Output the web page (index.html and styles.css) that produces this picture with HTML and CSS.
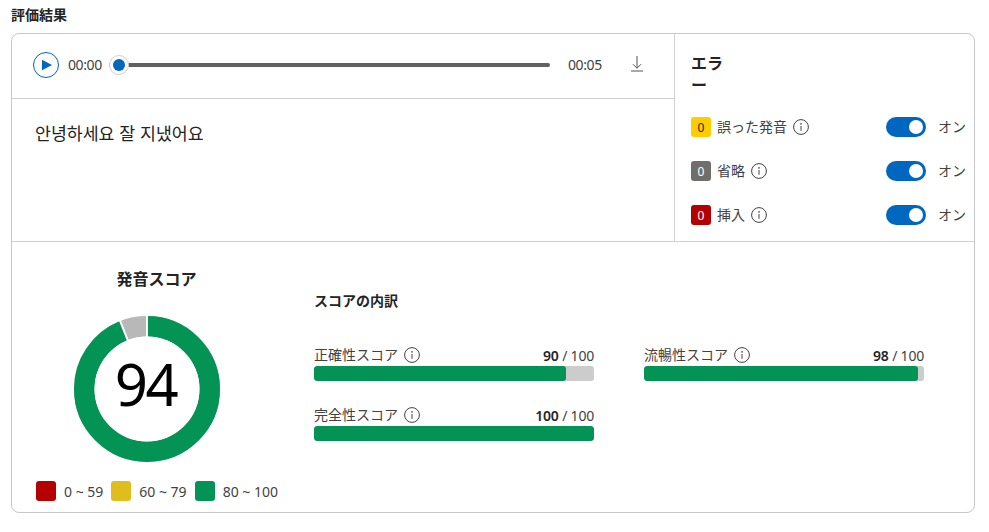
FILE: index.html
```html
<!DOCTYPE html>
<html lang="ja">
<head>
<meta charset="utf-8">
<title>評価結果</title>
<link rel="stylesheet" href="styles.css">
</head>
<body>
<svg class="defs" width="0" height="0" aria-hidden="true">
  <symbol id="info" viewBox="0 0 16 16">
    <circle cx="8" cy="8" r="7.4" fill="none" stroke="#424242" stroke-width="1"/>
    <circle cx="8" cy="4.9" r=".8" fill="#424242"/>
    <path d="M8 7v4.8" stroke="#424242" stroke-width="1" fill="none"/>
  </symbol>
</svg>
<main class="page">
  <h1 class="page-title">評価結果</h1>
  <section class="card">
    <div class="top">
      <div class="left">
        <div class="player">
          <span class="play">
            <svg width="12" height="12" viewBox="0 0 12 12"><path d="M1 .8 11 6 1 11.2Z" fill="#0067c0"/></svg>
          </span>
          <span class="time time-start">00:00</span>
          <div class="track"><span class="thumb"><span class="thumb-dot"></span></span></div>
          <span class="time time-end">00:05</span>
          <svg class="download" width="14" height="17" viewBox="0 0 14 17"><path d="M7 1v12M3 9.2 7 13.2l4-4M1 16h12" fill="none" stroke="#555" stroke-width="1"/></svg>
        </div>
        <p class="phrase" lang="ko">안녕하세요 잘 지냈어요</p>
      </div>
      <aside class="errors">
        <h2 class="errors-title">エラー</h2>
        <div class="error-row">
          <span class="count count-yellow">0</span><span class="error-label">誤った発音</span>
          <svg class="info" width="16" height="16"><use href="#info"/></svg>
          <span class="toggle"><span class="knob"></span></span><span class="toggle-text">オン</span>
        </div>
        <div class="error-row">
          <span class="count count-gray">0</span><span class="error-label">省略</span>
          <svg class="info" width="16" height="16"><use href="#info"/></svg>
          <span class="toggle"><span class="knob"></span></span><span class="toggle-text">オン</span>
        </div>
        <div class="error-row">
          <span class="count count-red">0</span><span class="error-label">挿入</span>
          <svg class="info" width="16" height="16"><use href="#info"/></svg>
          <span class="toggle"><span class="knob"></span></span><span class="toggle-text">オン</span>
        </div>
      </aside>
    </div>
    <div class="bottom">
      <div class="score">
        <h2 class="score-title">発音スコア</h2>
        <div class="donut">
          <svg width="148" height="148" viewBox="0 0 148 148">
            <circle cx="74" cy="74" r="62.75" fill="none" stroke="#b8b8b8" stroke-width="20.5"/>
            <circle class="arc" cx="74" cy="74" r="62.75" fill="none" stroke="#039455" stroke-width="20.5" pathLength="100" stroke-dasharray="94 6" transform="rotate(-90 74 74)"/>
            <path d="M74 74V0M74 74 46.8 5.2" stroke="#fff" stroke-width="2" fill="none"/>
            <circle cx="74" cy="74" r="52.5" fill="#fff"/>
          </svg>
          <span class="donut-value">94</span>
        </div>
        <div class="legend">
          <span class="swatch swatch-red"></span><span class="legend-text">0 ~ 59</span>
          <span class="swatch swatch-yellow"></span><span class="legend-text">60 ~ 79</span>
          <span class="swatch swatch-green"></span><span class="legend-text">80 ~ 100</span>
        </div>
      </div>
      <div class="breakdown">
        <h3 class="breakdown-title">スコアの内訳</h3>
        <div class="meters">
          <div class="meter">
            <div class="meter-head"><span class="meter-label">正確性スコア</span><svg class="info" width="16" height="16"><use href="#info"/></svg><span class="meter-value"><b>90</b> / 100</span></div>
            <div class="bar"><div class="fill" style="width:90%"></div></div>
          </div>
          <div class="meter">
            <div class="meter-head"><span class="meter-label">流暢性スコア</span><svg class="info" width="16" height="16"><use href="#info"/></svg><span class="meter-value"><b>98</b> / 100</span></div>
            <div class="bar"><div class="fill" style="width:98%"></div></div>
          </div>
          <div class="meter">
            <div class="meter-head"><span class="meter-label">完全性スコア</span><svg class="info" width="16" height="16"><use href="#info"/></svg><span class="meter-value"><b>100</b> / 100</span></div>
            <div class="bar"><div class="fill" style="width:100%"></div></div>
          </div>
        </div>
      </div>
    </div>
  </section>
</main>
</body>
</html>
```
FILE: styles.css
```css
* { box-sizing: border-box; }
html, body { margin: 0; padding: 0; background: #fff; }
body {
  width: 989px;
  height: 532px;
  overflow: hidden;
  font-family: "Noto Sans", "Noto Sans CJK JP", sans-serif;
  color: #242424;
  font-size: 14px;
}
.defs { position: absolute; }
.page { padding: 5px 14px 0 11px; }
.page-title { margin: 0 0 8px; font-size: 14px; line-height: 20px; font-weight: 600; }
.card {
  width: 964px;
  height: 480px;
  border: 1px solid #c8c8c8;
  border-radius: 8px;
  display: flex;
  flex-direction: column;
}
.top { display: flex; height: 208px; border-bottom: 1px solid #d1d1d1; }
.left { width: 663px; border-right: 1px solid #d1d1d1; }
.player {
  height: 65px;
  border-bottom: 1px solid #d1d1d1;
  display: flex;
  align-items: center;
  padding: 0 0 3px 21px;
}
.play {
  width: 26px; height: 26px;
  border: 1px solid #0067c0;
  border-radius: 50%;
  display: flex; align-items: center; justify-content: center;
  padding-left: 2px;
}
.time { font-size: 14px; color: #424242; line-height: 20px; letter-spacing: -.4px; }
.time-start { margin-left: 9px; width: 33px; }
.track {
  margin-left: 8px;
  width: 441px;
  height: 4px;
  background: #616161;
  border-radius: 2px;
  display: flex;
  align-items: center;
}
.thumb {
  width: 20px; height: 20px;
  background: #fff;
  border: 1px solid #d1d1d1;
  border-radius: 50%;
  display: flex; align-items: center; justify-content: center;
}
.thumb-dot { width: 12px; height: 12px; background: #0067c0; border-radius: 50%; }
.time-end { margin-left: 18px; width: 33px; }
.download { margin: 0 0 2px 29px; }
.phrase {
  margin: 22px 0 0 23px;
  font-family: "Noto Sans CJK KR", sans-serif;
  font-size: 17.3px;
  line-height: 24px;
  color: #242424;
}
.errors { flex: 1; padding: 18px 0 0 16px; min-width: 0; }
.errors-title { margin: 0 0 21px; width: 36px; font-size: 16px; line-height: 22px; font-weight: 600; }
.error-row { display: flex; align-items: center; height: 20px; margin-bottom: 24px; }
.count {
  width: 20px; height: 20px;
  border-radius: 3px;
  display: flex; align-items: center; justify-content: center;
  font-size: 12px;
}
.count-yellow { background: #ffcc00; color: #242424; }
.count-gray { background: #706e6b; color: #fff; }
.count-red { background: #b40000; color: #fff; }
.error-label { margin-left: 6px; font-size: 14px; line-height: 20px; color: #424242; }
.info { margin-left: 6px; flex: none; }
.toggle {
  margin-left: auto;
  width: 40px; height: 20px;
  background: #0067c0;
  border-radius: 10px;
  display: flex; align-items: center; justify-content: flex-end;
  padding-right: 3px;
}
.knob { width: 14px; height: 14px; border-radius: 50%; background: #fff; }
.toggle-text { margin-left: 12px; width: 36px; font-size: 14px; line-height: 20px; color: #424242; }
.bottom { flex: 1; display: flex; min-height: 0; }
.score { width: 302px; flex: none; }
.score-title {
  margin: 26px 0 0;
  text-align: center;
  width: 289px;
  font-size: 16px;
  line-height: 22px;
  font-weight: 600;
}
.donut { position: relative; width: 148px; height: 148px; margin: 25px 0 0 61px; }
.donut svg { display: block; }
.donut-value {
  position: absolute;
  inset: 0;
  display: flex; align-items: center; justify-content: center;
  font-size: 58px;
  font-weight: 400;
  line-height: 1;
  color: #000;
  letter-spacing: -2.5px;
  padding: 0 3px 10px 0;
}
.legend { display: flex; align-items: center; margin: 18px 0 0 24px; height: 20px; }
.swatch { width: 20px; height: 20px; border-radius: 3px; flex: none; }
.swatch-red { background: #b40000; }
.swatch-yellow { background: #dfbd1c; margin-left: 8px; }
.swatch-green { background: #039455; margin-left: 8px; }
.legend-text { margin-left: 8px; font-size: 14px; color: #424242; white-space: nowrap; }
.breakdown { flex: 1; padding-top: 49px; }
.breakdown-title { margin: 0 0 34px; font-size: 14px; line-height: 20px; font-weight: 600; }
.meters { display: grid; grid-template-columns: 280px 280px; column-gap: 50px; row-gap: 24px; }
.meter-head { display: flex; align-items: center; height: 20px; margin-bottom: 1px; }
.meter-label { font-size: 14px; color: #424242; line-height: 20px; }
.meter-value { margin-left: auto; font-size: 14px; color: #424242; letter-spacing: -.2px; }
.meter-value b { font-weight: 600; color: #242424; }
.bar { height: 15px; background: #ccc; border-radius: 3px; overflow: hidden; }
.fill { height: 100%; background: #039455; border-radius: 3px; }
```
